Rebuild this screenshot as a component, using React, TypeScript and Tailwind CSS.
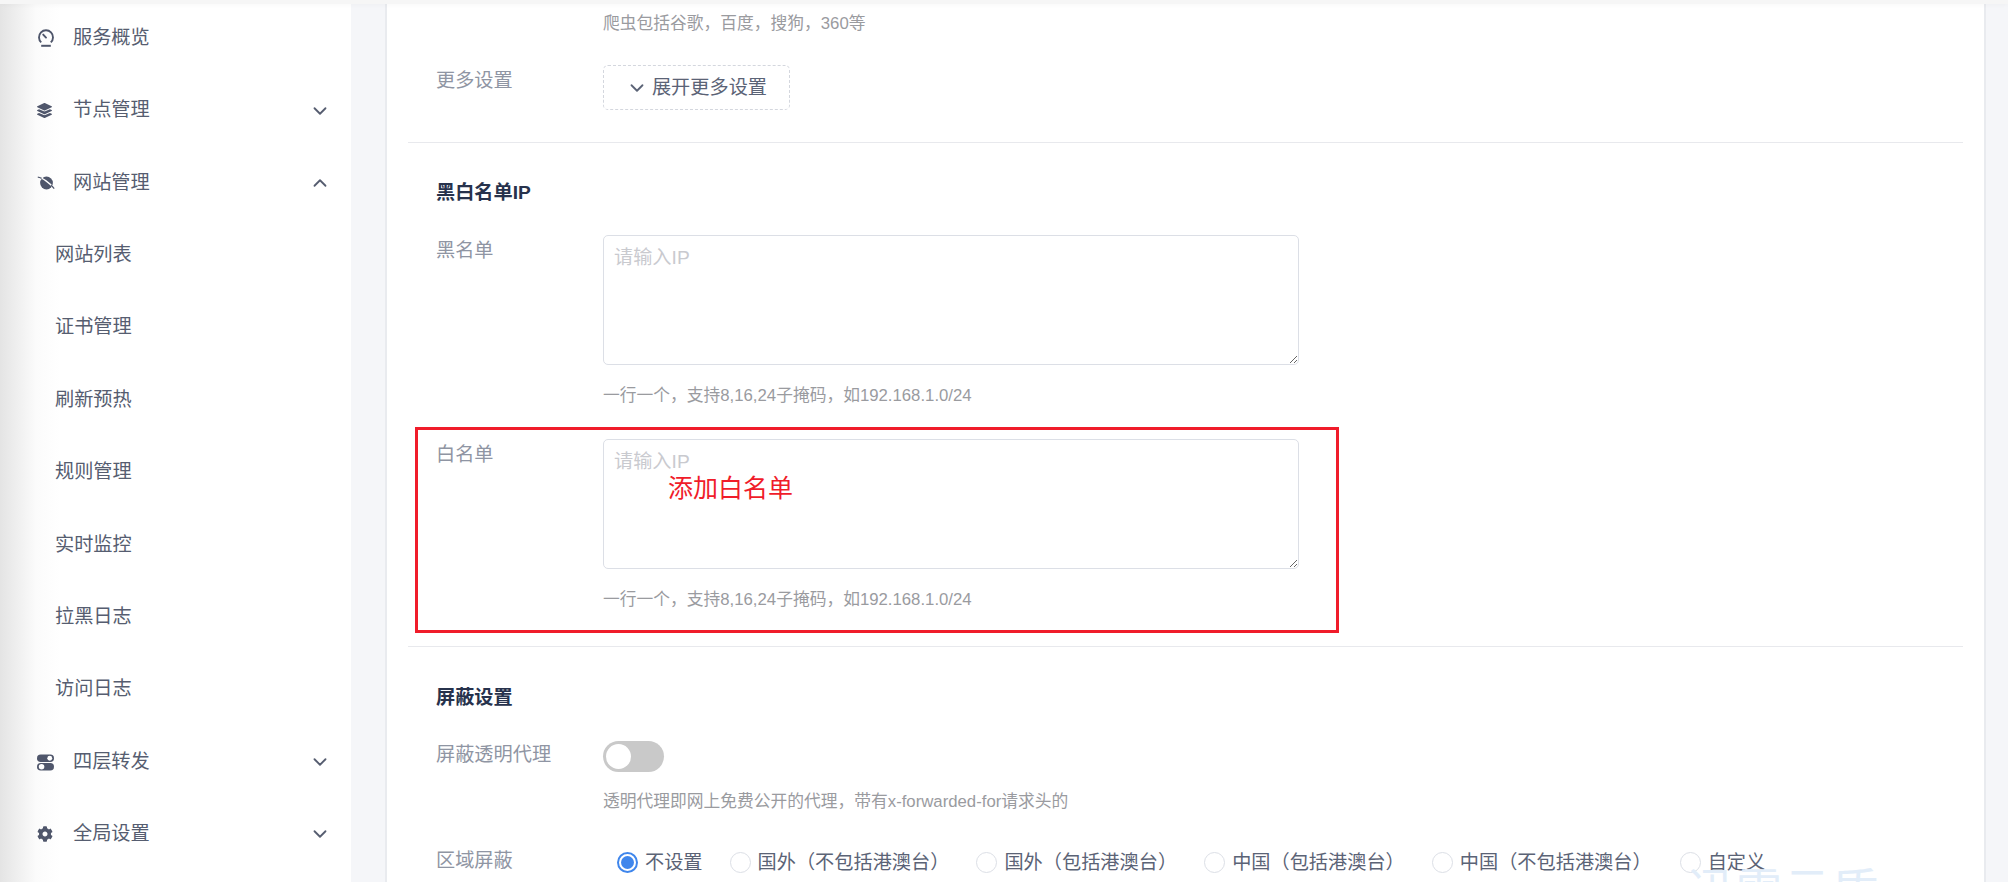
import { ChevronDown, ChevronUp } from 'lucide-react'
import { FaCog, FaLayerGroup } from 'react-icons/fa'
import type { ReactNode } from 'react'

const font = 'font-["Liberation_Sans","Noto_Sans_CJK_SC",sans-serif]'

function GaugeIcon() {
  return (
    <svg viewBox="0 0 18 18" className="h-[18px] w-[18px]" fill="none" stroke="currentColor" strokeWidth="1.9">
      <path d="M4.200 13.400a7 7 0 1 1 9.600 0" />
      <path d="M4.200 16.800h9.600" strokeWidth="2" />
      <path d="M9 8.600 6.200 5.600" strokeLinecap="round" />
    </svg>
  )
}

function PlanetIcon() {
  return (
    <svg viewBox="0 0 18 18" className="h-[18px] w-[18px]" fill="currentColor">
      <circle cx="9.500" cy="9" r="6.400" />
      <path d="M0.800 3.200C5 3.400 13 9 17.200 14.600" fill="none" stroke="#ffffff" strokeWidth="1.300" />
      <path d="M0.800 3.200C2 3.300 3.200 3.700 4.600 4.400M14 11.300c1.200 1 2.300 2.200 3.200 3.300" fill="none" stroke="currentColor" strokeWidth="1.200" />
    </svg>
  )
}

function TogglesIcon() {
  return (
    <svg viewBox="0 0 16 16" className="h-[17px] w-[17px]" fill="currentColor">
      <rect x="0" y="0.500" width="16" height="7" rx="3.500" />
      <circle cx="12" cy="4" r="2.300" fill="#ffffff" />
      <rect x="0" y="8.500" width="16" height="7" rx="3.500" />
      <circle cx="4.300" cy="12" r="2.600" fill="#ffffff" />
    </svg>
  )
}

function MenuItem({ icon, label, open }: { icon: ReactNode; label: string; open?: boolean }) {
  return (
    <div className="flex h-[72.4px] items-center pl-[37px] pr-[20px] text-[19.2px] text-[#565d70]">
      <span className="flex w-[36px] shrink-0 items-center text-[#4f566b]">{icon}</span>
      <span className="flex-1">{label}</span>
      {open === undefined ? null : open ? (
        <ChevronUp className="h-[22px] w-[22px]" strokeWidth={2} />
      ) : (
        <ChevronDown className="h-[22px] w-[22px]" strokeWidth={2} />
      )}
    </div>
  )
}

function SubItem({ label }: { label: string }) {
  return <div className="flex h-[72.4px] items-center pl-[55px] text-[19.2px] text-[#565d70]">{label}</div>
}

function Sidebar() {
  return (
    <aside className="w-[351px] shrink-0 bg-[linear-gradient(to_right,#e4e4e4,#fbfbfb_36px,#ffffff_60px)] pt-[2px]">
      <MenuItem icon={<GaugeIcon />} label="服务概览" />
      <MenuItem icon={<FaLayerGroup className="h-[15px] w-[15px]" />} label="节点管理" open={false} />
      <MenuItem icon={<PlanetIcon />} label="网站管理" open />
      <SubItem label="网站列表" />
      <SubItem label="证书管理" />
      <SubItem label="刷新预热" />
      <SubItem label="规则管理" />
      <SubItem label="实时监控" />
      <SubItem label="拉黑日志" />
      <SubItem label="访问日志" />
      <MenuItem icon={<TogglesIcon />} label="四层转发" open={false} />
      <MenuItem icon={<FaCog className="h-[16px] w-[16px]" />} label="全局设置" open={false} />
    </aside>
  )
}

function Label({ children }: { children: ReactNode }) {
  return <div className="w-[167px] shrink-0 text-[19.2px] leading-[28px] text-[#8f95a3]">{children}</div>
}

function Hint({ children, className }: { children: ReactNode; className: string }) {
  return <p className={`pl-[195px] text-[16.75px] leading-[26px] text-[#9a9b9f] ${className}`}>{children}</p>
}

function Title({ children, className }: { children: ReactNode; className: string }) {
  return <h3 className={`pl-[28px] text-[19.2px] font-semibold leading-[28px] text-[#27324c] ${className}`}>{children}</h3>
}

function IpField({ label, className }: { label: string; className: string }) {
  return (
    <div className={`flex pl-[28px] ${className}`}>
      <Label>
        <div className="pt-[2px]">{label}</div>
      </Label>
      <textarea
        readOnly
        placeholder="请输入IP"
        className="h-[130px] w-[696px] rounded-[5px] border border-[#dcdfe6] bg-white px-[10px] pt-[8px] text-[19.2px] leading-[28px] outline-none placeholder:text-[#c9cacf]"
      />
    </div>
  )
}

function Radio({ label, checked, className }: { label: string; checked?: boolean; className: string }) {
  return (
    <div className={`flex shrink-0 items-center gap-[7px] text-[19.2px] leading-[28px] text-[#5b6376] ${className}`}>
      {checked ? (
        <span className="flex h-[21px] w-[21px] items-center justify-center rounded-full border-2 border-[#3f86ec] bg-white">
          <span className="h-[13px] w-[13px] rounded-full bg-[#3f86ec]" />
        </span>
      ) : (
        <span className="h-[21px] w-[21px] rounded-full border border-[#dcdfe6] bg-white" />
      )}
      <span>{label}</span>
    </div>
  )
}

function Form() {
  return (
    <section className="relative h-full overflow-hidden border-x-2 border-[#e9ebef] bg-white px-[21px]">
      <Hint className="pt-[11px]">爬虫包括谷歌，百度，搜狗，360等</Hint>

      <div className="mt-[28px] flex pl-[28px]">
        <Label>
          <div className="pt-[2px]">更多设置</div>
        </Label>
        <button className="flex h-[45px] w-[187px] items-center justify-center gap-[4px] rounded-[5px] border border-dashed border-[#d4d7de] pt-[1px] text-[19.2px] text-[#5b6376]">
          <ChevronDown className="h-[22px] w-[22px]" strokeWidth={2} />
          展开更多设置
        </button>
      </div>

      <div className="mt-[32px] h-px bg-[#e8e9ed]" />

      <Title className="mt-[36px]">黑白名单IP</Title>
      <IpField label="黑名单" className="mt-[28px]" />
      <Hint className="mt-[18px]">一行一个，支持8,16,24子掩码，如192.168.1.0/24</Hint>

      <IpField label="白名单" className="mt-[30px]" />
      <Hint className="mt-[18px]">一行一个，支持8,16,24子掩码，如192.168.1.0/24</Hint>

      <div className="mt-[33px] h-px bg-[#e8e9ed]" />

      <Title className="mt-[37px]">屏蔽设置</Title>

      <div className="mt-[29px] flex pl-[28px]">
        <Label>屏蔽透明代理</Label>
        <span className="flex h-[31px] w-[61px] items-center rounded-full bg-[#c9c9c9] pl-[3px]">
          <span className="h-[25px] w-[25px] rounded-full bg-white" />
        </span>
      </div>
      <Hint className="mt-[17px]">透明代理即网上免费公开的代理，带有x-forwarded-for请求头的</Hint>

      <div className="mt-[32px] flex items-center pl-[28px]">
        <Label>
          <div className="pb-[3px]">区域屏蔽</div>
        </Label>
        <Radio label="不设置" checked className="ml-[14px]" />
        <Radio label="国外（不包括港澳台）" className="ml-[27px]" />
        <Radio label="国外（包括港澳台）" className="ml-[27px]" />
        <Radio label="中国（包括港澳台）" className="ml-[27px]" />
        <Radio label="中国（不包括港澳台）" className="ml-[27px]" />
        <Radio label="自定义" className="ml-[28px]" />
      </div>

      {/* red annotation drawn over the whitelist row */}
      <div className="absolute left-[28px] top-[427px] h-[206px] w-[924px] border-[3px] border-[#f01c2a]" />
      <div className="absolute left-[281px] top-[471px] text-[25px] leading-[34px] text-[#f01c2a]">添加白名单</div>
      {/* watermark cut off by the bottom edge */}
      <div className="absolute left-[1301px] top-[862px] text-[46px] leading-[56px] tracking-[2px] text-[#e2edf9]">迅雷云盾</div>
    </section>
  )
}

export default function App() {
  return (
    <div className={`relative flex h-[882px] w-[2008px] overflow-hidden bg-white ${font}`}>
      <Sidebar />
      <main className="min-w-0 flex-1 bg-[#f5f6f9] pl-[34px] pr-[22px]">
        <Form />
      </main>
      {/* header sliver sitting over the scrolled page */}
      <div className="absolute inset-x-0 top-0 h-[4px] bg-[#f6f6f6] shadow-[0_1px_4px_rgba(0,0,0,0.03)]" />
    </div>
  )
}
